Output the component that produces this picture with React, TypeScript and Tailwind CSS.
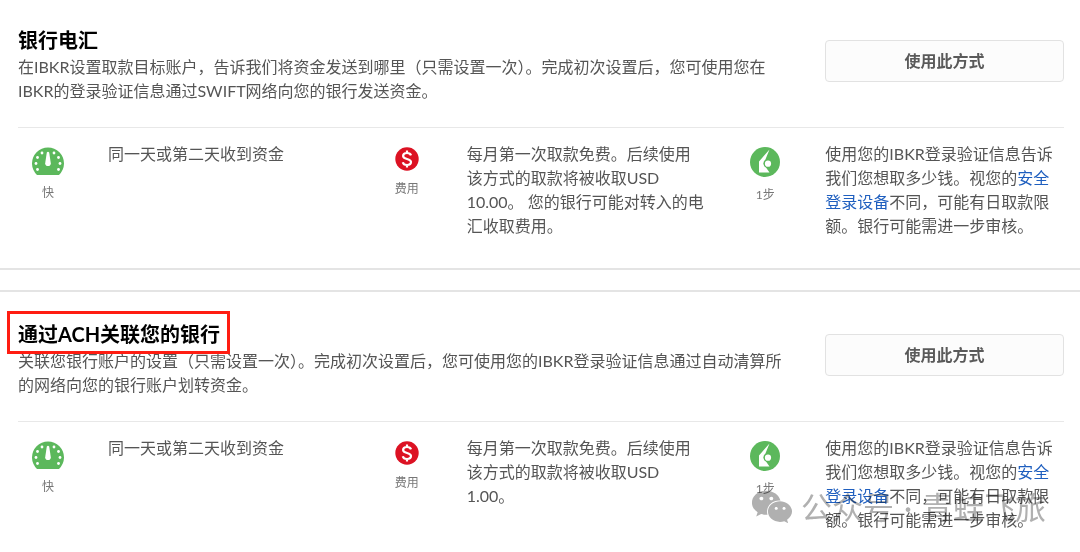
import { ReactNode } from "react";
import { FaWeixin } from "react-icons/fa";

function SpeedIcon() {
  return (
    <svg width="32" height="28" viewBox="0 0 32 28">
      <path d="M5 28A16 16 0 1 1 27 28Z" fill="#5cb85c" />
      <g fill="#fff">
        <path d="M14.8 5.5q1.2-1.6 2.4 0l1.6 10.8a2.8 2.8 0 1 1-5.6 0Z" />
        <circle cx="10" cy="6" r="1.4" />
        <circle cx="22" cy="6" r="1.4" />
        <circle cx="5.5" cy="10.5" r="1.4" />
        <circle cx="26.5" cy="10.5" r="1.4" />
        <circle cx="4" cy="16.5" r="1.4" />
        <circle cx="28" cy="16.5" r="1.4" />
        <circle cx="5.5" cy="22.5" r="1.4" />
        <circle cx="26.5" cy="22.5" r="1.4" />
      </g>
    </svg>
  );
}

function FeeIcon() {
  return (
    <svg width="24" height="24" viewBox="0 0 24 24">
      <circle cx="12" cy="12" r="11.7" fill="#dc1223" />
      <path
        d="M16 8.4C15.6 6.9 14 6 12 6 9.7 6 8.1 7.2 8.1 8.9c0 4 7.9 2.1 7.9 6.2 0 1.7-1.7 2.9-4 2.9-2.2 0-3.8-1-4.2-2.7M12 3.5V6M12 18v2.5"
        fill="none"
        stroke="#fff"
        strokeWidth="2.2"
      />
    </svg>
  );
}

function StepIcon() {
  return (
    <svg width="30" height="30" viewBox="0 0 30 30">
      <circle cx="15" cy="15" r="15" fill="#5cb85c" />
      <path d="M19.5 2.5L9 14.5V25.5H19.5L15.8 20.3A4.4 4.4 0 0 1 15.3 12.8Z" fill="#fff" />
      <circle cx="18" cy="16.7" r="4.3" fill="#5cb85c" />
      <circle cx="18" cy="16.7" r="3.1" fill="#fff" />
    </svg>
  );
}

type FeatureProps = {
  icon: ReactNode;
  label: string;
  children: ReactNode;
};

function Feature({ icon, label, children }: FeatureProps) {
  return (
    <div className="flex gap-[30px]">
      <div className="flex w-[60px] shrink-0 flex-col items-center pt-[5px]">
        {icon}
        <span className="mt-[9px] text-xs leading-[18px] text-[#777]">{label}</span>
      </div>
      <p className="flex-1">{children}</p>
    </div>
  );
}

type MethodProps = {
  title: string;
  description: string;
  fee: string;
  marked?: boolean;
};

function Method({ title, description, fee, marked }: MethodProps) {
  return (
    <div className="pr-4 pl-[18px]">
      <div className="flex items-start gap-10">
        <div className="flex-1">
          <h2 className="relative w-fit pb-[3px] text-xl leading-6 font-bold text-black">
            {title}
            {marked && (
              <span className="absolute -top-[11px] -right-[10px] -bottom-[5px] -left-[11px] border-[3px] border-[#ff1d12]" />
            )}
          </h2>
          <p>{description}</p>
        </div>
        <button className="mt-3 h-[42px] w-[239px] rounded border border-[#e2e2e2] bg-[#fcfcfc] font-bold text-[#5a5a5a]">
          使用此方式
        </button>
      </div>

      <div className="mt-6 grid grid-cols-3 gap-[30px] border-t border-[#e8e8e8] pt-[14px]">
        <Feature icon={<SpeedIcon />} label="快">
          同一天或第二天收到资金
        </Feature>
        <Feature icon={<FeeIcon />} label="费用">
          {fee}
        </Feature>
        <Feature icon={<StepIcon />} label="1步">
          使用您的IBKR登录验证信息告诉我们您想取多少钱。视您的
          <a href="#" className="text-[#1f5fbf]">
            安全登录设备
          </a>
          不同，可能有日取款限额。银行可能需进一步审核。
        </Feature>
      </div>
    </div>
  );
}

export default function App() {
  return (
    <main className="relative bg-white font-[Lato,'Noto_Sans_CJK_SC',sans-serif] text-base leading-6 text-[#555]">
      <section className="border-b-2 border-[#e4e4e4] pt-7 pb-[30px]">
        <Method
          title="银行电汇"
          description="在IBKR设置取款目标账户，告诉我们将资金发送到哪里（只需设置一次）。完成初次设置后，您可使用您在IBKR的登录验证信息通过SWIFT网络向您的银行发送资金。"
          fee="每月第一次取款免费。后续使用该方式的取款将被收取USD 10.00。 您的银行可能对转入的电汇收取费用。"
        />
      </section>

      <section className="mt-5 border-t-2 border-[#e4e4e4] pt-[30px] pb-4">
        <Method
          title="通过ACH关联您的银行"
          description="关联您银行账户的设置（只需设置一次）。完成初次设置后，您可使用您的IBKR登录验证信息通过自动清算所的网络向您的银行账户划转资金。"
          fee="每月第一次取款免费。后续使用该方式的取款将被收取USD 1.00。"
          marked
        />
      </section>

      {/* 水印 */}
      <div className="pointer-events-none absolute right-[34px] bottom-5 flex items-center text-[31px] leading-10 text-[#b0b0b0] mix-blend-multiply">
        <FaWeixin className="mr-2 size-[42px]" />
        <span>公众号</span>
        <span className="w-7 text-center">·</span>
        <span>青蛙飞旅</span>
      </div>
    </main>
  );
}
